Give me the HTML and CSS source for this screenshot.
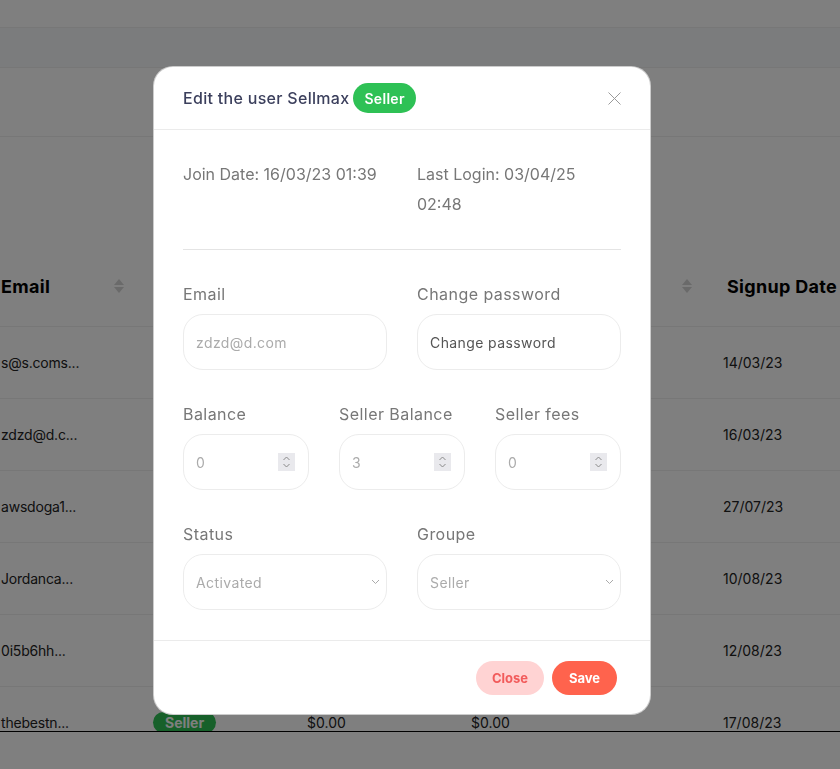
FILE: index.html
```html
<!DOCTYPE html>
<html lang="en">
<head>
<meta charset="utf-8">
<title>Edit user</title>
<link rel="stylesheet" href="styles.css">
</head>
<body>
<div class="page">
  <div class="topbar"></div>
  <div class="band"></div>
  <div class="hero"></div>
  <div class="table-wrap">
    <div class="trow thead">
      <div class="cell email-cell"><span>Email</span><span class="sort"></span></div>
      <div class="cell"></div>
      <div class="cell"></div>
      <div class="cell sorted"><span></span><span class="sort"></span></div>
      <div class="cell signup">Signup Date</div>
    </div>
    <div class="trow">
      <div class="cell email-cell">s@s.coms...</div>
      <div class="cell"></div>
      <div class="cell"></div>
      <div class="cell"></div>
      <div class="cell date">14/03/23</div>
    </div>
    <div class="trow">
      <div class="cell email-cell">zdzd@d.c...</div>
      <div class="cell"></div>
      <div class="cell"></div>
      <div class="cell"></div>
      <div class="cell date">16/03/23</div>
    </div>
    <div class="trow">
      <div class="cell email-cell">awsdoga1...</div>
      <div class="cell"></div>
      <div class="cell"></div>
      <div class="cell"></div>
      <div class="cell date">27/07/23</div>
    </div>
    <div class="trow">
      <div class="cell email-cell">Jordanca...</div>
      <div class="cell"></div>
      <div class="cell"></div>
      <div class="cell"></div>
      <div class="cell date">10/08/23</div>
    </div>
    <div class="trow">
      <div class="cell email-cell">0i5b6hh...</div>
      <div class="cell"></div>
      <div class="cell"></div>
      <div class="cell"></div>
      <div class="cell date">12/08/23</div>
    </div>
    <div class="trow">
      <div class="cell email-cell">thebestn...</div>
      <div class="cell"><span class="tbadge">Seller</span></div>
      <div class="cell">$0.00</div>
      <div class="cell">$0.00</div>
      <div class="cell date">17/08/23</div>
    </div>
  </div>
</div>

<div class="backdrop"></div>

<div class="modal">
  <div class="modal-header">
    <div class="modal-title">Edit the user Sellmax <span class="badge">Seller</span></div>
    <svg class="close-x" width="13" height="13" viewBox="0 0 13 13"><path d="M0.5 0.5L12.5 12.5M12.5 0.5L0.5 12.5" stroke="#9a9a9a" stroke-width="1" fill="none"/></svg>
  </div>
  <div class="modal-body">
    <div class="dates">
      <div>Join Date: 16/03/23 01:39</div>
      <div>Last Login: 03/04/25 02:48</div>
    </div>
    <div class="divider"></div>
    <div class="grid2">
      <div class="field">
        <div class="label">Email</div>
        <div class="input placeholder">zdzd@d.com</div>
      </div>
      <div class="field">
        <div class="label">Change password</div>
        <div class="input value">Change password</div>
      </div>
    </div>
    <div class="grid3">
      <div class="field">
        <div class="label">Balance</div>
        <div class="input placeholder"><span>0</span><svg class="spin" width="17" height="18" viewBox="0 0 17 18"><rect width="17" height="18" fill="#e9e9ed"/><path d="M5.5 7L8.5 4L11.5 7M5.5 11L8.5 14L11.5 11" stroke="#8a8a8a" stroke-width="1" fill="none"/></svg></div>
      </div>
      <div class="field">
        <div class="label">Seller Balance</div>
        <div class="input placeholder"><span>3</span><svg class="spin" width="17" height="18" viewBox="0 0 17 18"><rect width="17" height="18" fill="#e9e9ed"/><path d="M5.5 7L8.5 4L11.5 7M5.5 11L8.5 14L11.5 11" stroke="#8a8a8a" stroke-width="1" fill="none"/></svg></div>
      </div>
      <div class="field">
        <div class="label">Seller fees</div>
        <div class="input placeholder"><span>0</span><svg class="spin" width="17" height="18" viewBox="0 0 17 18"><rect width="17" height="18" fill="#e9e9ed"/><path d="M5.5 7L8.5 4L11.5 7M5.5 11L8.5 14L11.5 11" stroke="#8a8a8a" stroke-width="1" fill="none"/></svg></div>
      </div>
    </div>
    <div class="grid2">
      <div class="field">
        <div class="label">Status</div>
        <div class="input placeholder select"><span>Activated</span><svg width="9" height="6" viewBox="0 0 9 6"><path d="M1 1L4.5 4.5L8 1" stroke="#aaaaaa" stroke-width="1" fill="none"/></svg></div>
      </div>
      <div class="field">
        <div class="label">Groupe</div>
        <div class="input placeholder select"><span>Seller</span><svg width="9" height="6" viewBox="0 0 9 6"><path d="M1 1L4.5 4.5L8 1" stroke="#aaaaaa" stroke-width="1" fill="none"/></svg></div>
      </div>
    </div>
  </div>
  <div class="modal-footer">
    <button class="btn btn-close">Close</button>
    <button class="btn btn-save">Save</button>
  </div>
</div>
</body>
</html>
```

FILE: styles.css
```css
* { box-sizing: border-box; }

html, body {
  margin: 0;
  padding: 0;
  background: #ffffff;
  font-family: Inter, "Noto Sans", sans-serif;
  overflow: hidden;
}

.page {
  width: 840px;
  height: 769px;
}

.topbar {
  height: 28px;
  border-bottom: 1px solid #eeeeee;
}

.band {
  height: 40px;
  background: #f6f8fa;
  border-bottom: 1px solid #eeeeee;
}

.hero {
  height: 69px;
  border-bottom: 1px solid #eeeeee;
}

.table-wrap {
  height: 595px;
  padding-top: 109px;
  overflow: hidden;
  border-bottom: 1px solid #000000;
}

.trow {
  display: grid;
  grid-template-columns: 137px 154px 164px 256px 1fr;
  height: 72px;
  border-bottom: 1px solid #eeeeee;
  align-items: center;
  font-size: 14px;
  color: #222222;
  white-space: nowrap;
}

.trow.thead {
  height: 81px;
  font-size: 18px;
  letter-spacing: 0.3px;
  font-weight: 700;
  color: #000000;
}

.cell {
  padding: 0 16px;
  overflow: hidden;
}

.email-cell {
  padding: 0 12px 0 1px;
  display: flex;
  justify-content: space-between;
  align-items: center;
  letter-spacing: -0.2px;
}
.thead .email-cell { letter-spacing: 0.3px; }

.sorted {
  display: flex;
  justify-content: space-between;
  align-items: center;
  padding-right: 18px;
}

.sort {
  width: 12px;
  height: 16px;
  position: relative;
  display: inline-block;
}
.sort::before, .sort::after {
  content: "";
  position: absolute;
  left: 1px;
  border-left: 5px solid transparent;
  border-right: 5px solid transparent;
}
.sort::before { top: 1px; border-bottom: 6px solid #d4d4d4; }
.sort::after { top: 9px; border-top: 6px solid #d4d4d4; }

.signup { padding-left: 16px; }
.date { padding-left: 12px; }

.tbadge {
  display: inline-block;
  background: #2ec155;
  color: #ffffff;
  font-weight: 700;
  font-size: 14px;
  padding: 2px 12px;
  border-radius: 12px;
}

.backdrop {
  position: fixed;
  inset: 0;
  background: rgba(0, 0, 0, 0.5);
}

.modal {
  position: fixed;
  left: 153px;
  top: 66px;
  width: 498px;
  background: #ffffff;
  border: 1px solid rgba(0, 0, 0, 0.2);
  border-radius: 20px;
  overflow: hidden;
  color: #777777;
}

.modal-header {
  display: flex;
  justify-content: space-between;
  align-items: center;
  padding: 16px 29px;
  border-bottom: 1px solid #ebebeb;
}

.modal-title {
  font-size: 16px;
  font-weight: 500;
  letter-spacing: 0.3px;
  color: #3b3f5c;
  display: flex;
  align-items: center;
  gap: 4px;
}

.badge {
  display: inline-flex;
  align-items: center;
  height: 30px;
  padding: 0 11px;
  border-radius: 15px;
  background: #2ec155;
  color: #ffffff;
  font-size: 14px;
  font-weight: 600;
}

.close-x { display: block; }

.modal-body {
  padding: 29px 29px 30px;
}

.dates {
  display: grid;
  grid-template-columns: 1fr 1fr;
  column-gap: 30px;
  font-size: 16px;
  line-height: 30px;
  color: #777777;
}

.divider {
  margin: 30px 0;
  border-top: 1px solid #e4e4e4;
}

.grid2, .grid3 {
  display: grid;
  column-gap: 30px;
}
.grid2 { grid-template-columns: 1fr 1fr; }
.grid3 { grid-template-columns: 1fr 1fr 1fr; }
.grid2 + .grid3, .grid3 + .grid2 { margin-top: 30px; }

.label {
  font-size: 16px;
  line-height: 28px;
  margin-bottom: 6px;
  letter-spacing: 0.45px;
  color: #777777;
}

.input {
  height: 56px;
  border: 1px solid #ececec;
  border-radius: 20px;
  padding: 0 13px 0 12px;
  display: flex;
  align-items: center;
  justify-content: space-between;
  font-size: 14px;
  letter-spacing: 0.4px;
}

.input.placeholder { color: #ababab; }
.input.value { color: #555555; }
.input.select { padding-right: 6px; }

.spin { display: block; }

.modal-footer {
  border-top: 1px solid #ebebeb;
  padding: 20px 33px 19px;
  display: flex;
  justify-content: flex-end;
  gap: 8px;
}

.btn {
  height: 34px;
  border: none;
  border-radius: 17px;
  font-family: inherit;
  font-size: 13px;
  font-weight: 700;
  cursor: pointer;
}

.btn-close {
  width: 68px;
  background: #ffd3d3;
  color: #f25b5b;
}

.btn-save {
  width: 65px;
  background: #ff634d;
  color: #ffffff;
}
```
